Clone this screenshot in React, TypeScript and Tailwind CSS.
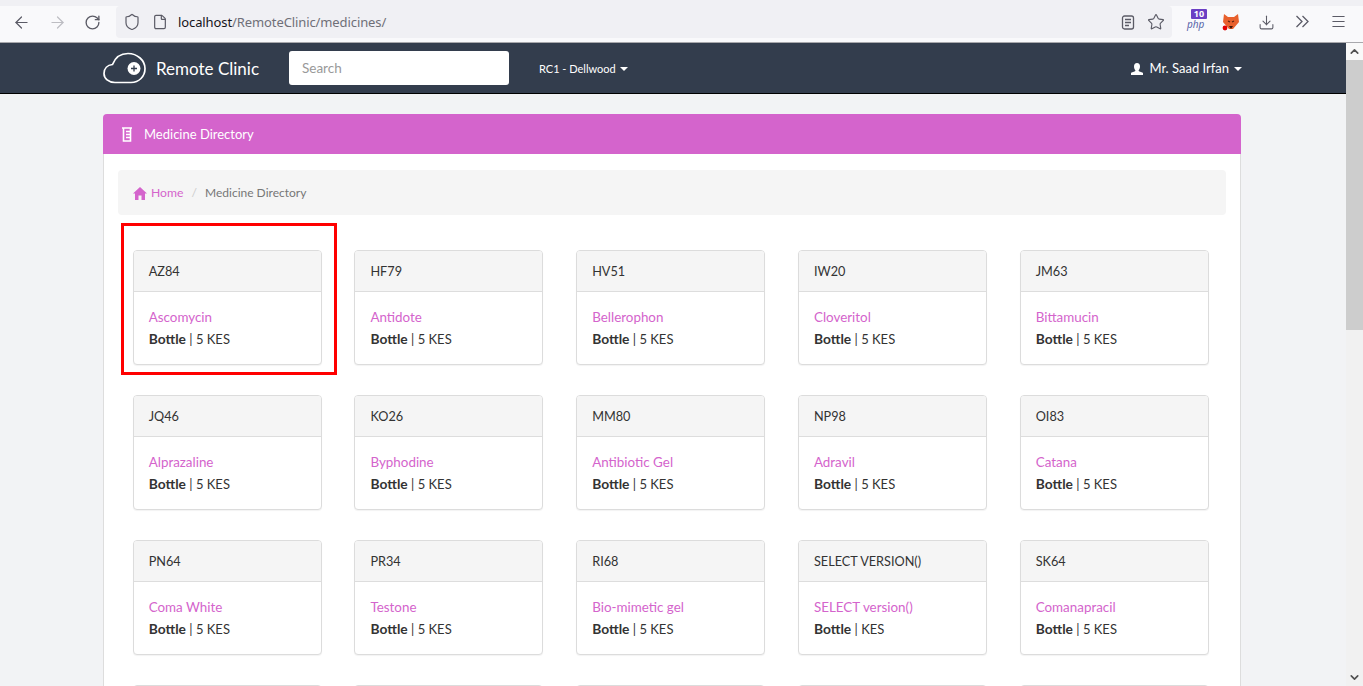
import { ArrowLeft, ArrowRight, RotateCw, Shield, File, Star, Download, Menu, ChevronUp, ChevronDown } from "lucide-react";

const meds: [string, string, string?][] = [
  ["AZ84", "Ascomycin"], ["HF79", "Antidote"], ["HV51", "Bellerophon"], ["IW20", "Cloveritol"], ["JM63", "Bittamucin"],
  ["JQ46", "Alprazaline"], ["KO26", "Byphodine"], ["MM80", "Antibiotic Gel"], ["NP98", "Adravil"], ["OI83", "Catana"],
  ["PN64", "Coma White"], ["PR34", "Testone"], ["RI68", "Bio-mimetic gel"], ["SELECT VERSION()", "SELECT version()", "KES"], ["SK64", "Comanapracil"],
];

function Caret() {
  return <span className="inline-block w-0 h-0 border-x-[4px] border-x-transparent border-t-[4px] border-t-white align-middle" />;
}

function Browser() {
  return (
    <div className="h-[43px] shrink-0 bg-[#f9f9fb] border-b border-[#a8a8ac] relative font-['Noto_Sans',sans-serif]">
      <div className="h-[6px] bg-[#f0f0f4]" />
      <div className="flex items-center h-[32px] text-[#5b5b66]">
        <div className="w-[116px] flex items-center pl-[12px] gap-[17px]">
          <ArrowLeft size={19} strokeWidth={1.5} />
          <ArrowRight size={19} strokeWidth={1.5} className="text-[#bdbdc2]" />
          <RotateCw size={17} strokeWidth={1.9} />
        </div>
        <div className="w-[1056px] h-[32px] rounded-[4px] bg-[#f0f0f4] flex items-center pl-[7px] pr-[7px]">
          <Shield size={18} strokeWidth={1.6} />
          <File size={16} strokeWidth={1.8} className="ml-[11px]" />
          <span className="ml-[10px] pt-[2px] text-[13px] tracking-[-0.1px] text-[#15141a]">localhost<span className="text-[#6f6f78]">/RemoteClinic/medicines/</span></span>
          <div className="ml-auto flex items-center gap-[12px]">
            <svg width="14" height="15" viewBox="0 0 14 15" fill="none" stroke="currentColor" strokeWidth="1.3"><rect x="1.500" y="1" width="11" height="13" rx="2" /><path d="M4 4.500h6M4 7.500h6M4 10.500h4" /></svg>
            <Star size={18} strokeWidth={1.5} />
          </div>
        </div>
        <div className="flex-1 h-[32px] relative">
          <div className="absolute left-[19px] top-[3px] w-[16px] h-[10px] bg-[#6b3fc4] rounded-[1px] text-white text-[9px] leading-[10px] font-bold text-center">10</div>
          <span className="absolute left-[15px] top-[13px] text-[#5763a8] italic text-[10px] leading-[10px]">php</span>
          <svg className="absolute left-[50px] top-[7px]" width="18" height="18" viewBox="0 0 18 18">
            <path d="M2 1l4 3h6l4-3 1 8-6 7H7L1 9z" fill="#e8602c" />
            <path d="M6 8l2 1M12 8l-2 1" stroke="#5a2110" strokeWidth="1.200" />
            <path d="M7 13h4l-2 3z" fill="#40160a" />
            <circle cx="3" cy="15" r="2.400" fill="#e00000" />
          </svg>
          <Download size={17} strokeWidth={1.500} className="absolute left-[86px] top-[8px]" />
          <svg className="absolute left-[123px] top-[8px]" width="15" height="15" viewBox="0 0 15 15" fill="none" stroke="currentColor" strokeWidth="1.300"><path d="M1.500 2l5.500 5.500-5.500 5.500M7.500 2l5.500 5.500-5.500 5.500" /></svg>
          <Menu size={17} strokeWidth={1.500} className="absolute left-[158px] top-[7px]" />
        </div>
      </div>
    </div>
  );
}

function Navbar() {
  return (
    <div className="h-[51px] shrink-0 bg-[#333d4d] border-b border-black flex items-center text-white">
      <svg className="ml-[103px]" width="44" height="32" viewBox="0 0 44 32" fill="none">
        <path d="M12 30.500C5.500 30.500 1 26.500 1 21.500C1 16.500 4.500 13 9.500 12.500C12 6 17.500 1.500 25 1.500C34.500 1.500 42 8.500 42 16.500C42 24.500 36 30.500 28 30.500Z" stroke="white" strokeWidth="1.700" />
        <circle cx="31" cy="16.500" r="6.500" fill="white" />
        <path d="M28 16.500h6M31 13.500v6" stroke="#333d4d" strokeWidth="1.300" />
      </svg>
      <span className="ml-[9px] w-[133px] pt-[2px] text-[17px]">Remote Clinic</span>
      <input placeholder="Search" className="w-[220px] h-[34px] rounded-[3px] bg-white px-[13px] text-[13.500px] placeholder:text-[#999] outline-none" />
      <a className="ml-[30px] pt-[2px] text-[11px] flex items-center gap-[4px]">RC1 - Dellwood <Caret /></a>
      <div className="ml-auto mr-[104px] pt-[1px] flex items-center text-[13px]">
        <svg width="12" height="12" viewBox="0 0 12 12" fill="white" className="mr-[6px]"><path d="M6 0c2 0 3 1.500 3 3.500S8 7 7.500 7.500c0 1 3 1.200 4.500 2.500v2H0v-2c1.500-1.300 4.500-1.500 4.500-2.500C4 7 3 5.500 3 3.500S4 0 6 0z" /></svg>
        <span>Mr. Saad Irfan</span>
        <span className="ml-[5px] flex"><Caret /></span>
      </div>
    </div>
  );
}

function Card({ code, name, unit }: { code: string; name: string; unit: string }) {
  return (
    <div className="h-[115px] rounded-[4px] border border-[#dcdcdc] bg-white shadow-[0_1px_1px_rgba(0,0,0,0.05)] overflow-hidden">
      <div className="h-[41px] bg-[#f5f5f5] border-b border-[#dddddd] px-[15px] pt-[2px] flex items-center text-[12.700px] text-[#333]">{code}</div>
      <div className="px-[15px] pt-[14px] text-[13px] leading-[22px] text-[#333]">
        <a className="block text-[13.400px] text-[#d464cc]">{name}</a>
        <div><b className="font-bold text-[13.800px]">Bottle</b> | {unit}</div>
      </div>
    </div>
  );
}

export default function App() {
  return (
    <div className="h-[686px] w-full flex flex-col overflow-hidden relative font-['Lato',sans-serif] bg-[#f2f3f5]">
      <Browser />
      <div className="flex flex-1 min-h-0">
        <div className="flex-1 min-w-0 flex flex-col overflow-hidden">
          <Navbar />
          <div className="pt-[20px] pl-[103px] pr-[105px]">
            <div className="rounded-t-[4px] overflow-hidden">
              <div className="h-[40px] bg-[#d464cc] flex items-center pl-[18px] text-white text-[13px]">
                <svg width="12" height="15" viewBox="0 0 12 15" fill="none" stroke="white" strokeWidth="1.600"><path d="M1 1h10M2.500 1v13h7V1M5 4.500h4.500M5 7.500h4.500M5 10.500h4.500" /></svg>
                <span className="ml-[11px] pt-[2px]">Medicine Directory</span>
              </div>
              <div className="border-x border-[#dddddd] bg-white px-[14px] pt-[16px] pb-[20px]">
                <div className="h-[45px] rounded-[4px] bg-[#f5f5f5] flex items-center px-[15px] text-[12.200px] pt-[1px]">
                  <svg width="14" height="13" viewBox="0 0 14 13" fill="#d464cc"><path d="M7 0L0 6.500h2V13h3.500V8.500h3V13H12V6.500h2z" /></svg>
                  <a className="ml-[4px] text-[#d464cc]">Home</a>
                  <span className="ml-[8px] mr-[8px] text-[#ccc]">/</span>
                  <span className="text-[12px] text-[#777]">Medicine Directory</span>
                </div>
                <div className="mt-[35px] ml-[14.700px] w-[1076px] grid grid-cols-[repeat(5,189px)] gap-x-[32.750px] gap-y-[30px]">
                  {meds.map(([c, n, u]) => <Card key={c} code={c} name={n} unit={u ?? "5 KES"} />)}
                  {["a", "b", "c", "d", "e"].map((k) => <div key={k} className="h-[115px] rounded-[4px] border border-[#dcdcdc] bg-[#f5f5f5]" />)}
                </div>
              </div>
            </div>
          </div>
        </div>
        <div className="w-[17px] shrink-0 bg-[#f1f1f1] flex flex-col text-[#505050]">
          <div className="h-[17px] bg-[#f9f9f9] flex items-center justify-center"><ChevronUp size={13} strokeWidth={3} /></div>
          <div className="h-[270px] bg-[#cdcdcd]" />
          <div className="mt-auto h-[17px] flex items-center justify-center"><ChevronDown size={13} strokeWidth={3} /></div>
        </div>
      </div>
      <div className="absolute left-[121px] top-[223px] w-[216px] h-[152px] border-[3px] border-[#ff0000]" />
    </div>
  );
}
